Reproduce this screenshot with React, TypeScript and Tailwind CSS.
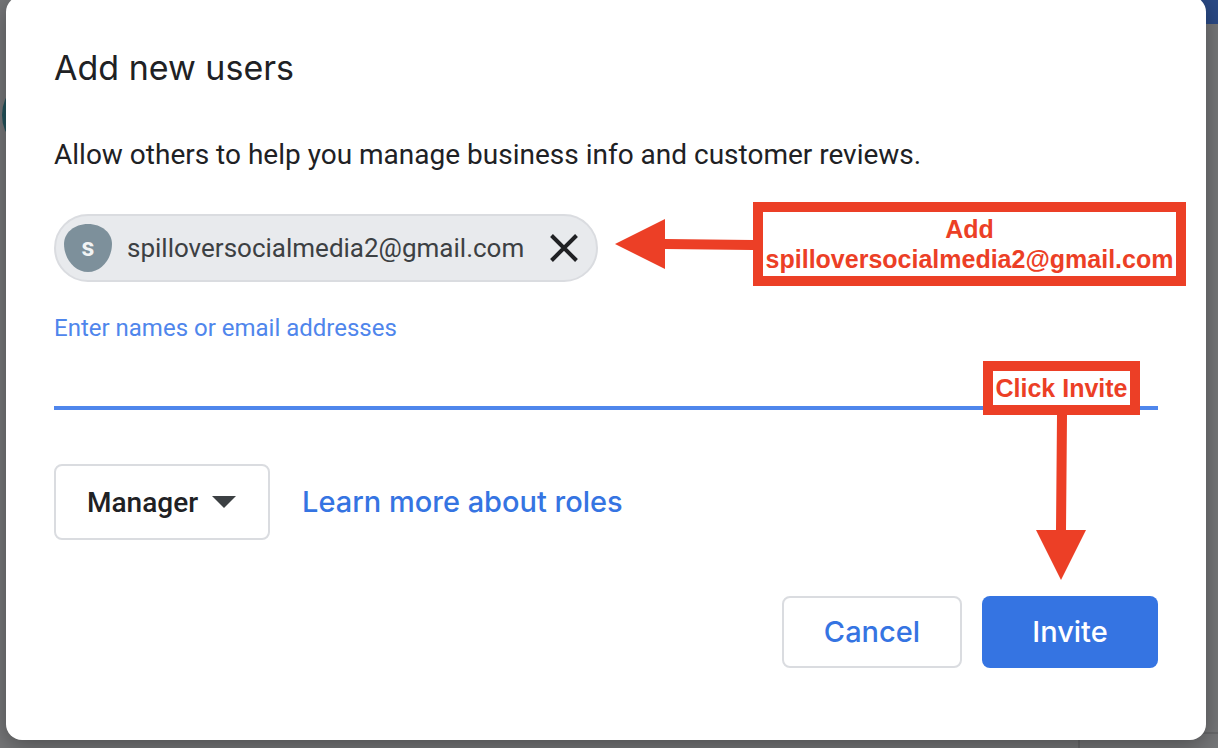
import { useState } from "react";

function Backdrop() {
  return (
    <div aria-hidden="true" className="absolute inset-0 overflow-hidden bg-[#767779]">
      <div className="absolute right-0 top-0 h-6 w-10 bg-[#2a4a86]" />
      <div className="absolute left-0.5 top-[75px] size-20 rounded-full bg-[#23545c]" />
      <div className="absolute bottom-3.5 right-0 h-0.5 w-[138px] bg-[#68696b]" />
      <div className="absolute bottom-0 right-[138px] h-3.5 w-0.5 bg-[#68696b]" />
    </div>
  );
}

function Chip({ email, onRemove }: { email: string; onRemove: () => void }) {
  return (
    <div className="flex h-[68px] w-[544px] items-center rounded-full border-2 border-[#dadce0] bg-[#e8eaed] pl-2 pr-4">
      <svg viewBox="0 0 48 48" className="size-12 shrink-0" aria-hidden="true">
        <path
          d="M24 0C38 0 48 9 48 20C48 34 38 48 24 48C10 48 0 34 0 20C0 9 10 0 24 0Z"
          fill="#7d909b"
        />
        <text
          x="24"
          y="32"
          textAnchor="middle"
          fill="#f1f3f4"
          fontSize="25"
          fontWeight="700"
          fontFamily="Roboto, sans-serif"
        >
          s
        </text>
      </svg>
      <span className="ml-[15px] flex-1 whitespace-nowrap text-[26px] leading-8 text-[#3c4043]">
        {email}
      </span>
      <button type="button" aria-label={"Remove " + email} onClick={onRemove} className="p-0.5">
        <svg viewBox="0 0 28 28" className="size-7" aria-hidden="true">
          <path d="M1.5 1.5L26.500 26.500M26.500 1.5L1.5 26.500" stroke="#202124" strokeWidth="4" />
        </svg>
      </button>
    </div>
  );
}

const callout =
  "border-[10px] border-[#ec3f26] bg-white text-center font-['Liberation_Sans',Arial,sans-serif] text-[25px] font-bold leading-[30px] text-[#ec3f26]";

export default function App() {
  const [emails, setEmails] = useState(["spilloversocialmedia2@gmail.com"]);

  return (
    <div className="relative min-h-screen overflow-hidden pb-2 pl-1.5 pr-3 font-[Roboto,sans-serif]">
      <Backdrop />
      <main
        role="dialog"
        aria-labelledby="dialog-title"
        className="relative -mt-1 rounded-2xl bg-white px-12 pb-[72px] pt-12 shadow-[0_6px_24px_rgba(0,0,0,0.35)]"
      >
        <h1 id="dialog-title" className="font-[Inter,sans-serif] text-[34px] leading-12 text-[#202124]">
          Add new users
        </h1>
        <p className="mt-[45px] text-[28px] leading-9 text-[#202124]">
          Allow others to help you manage business info and customer reviews.
        </p>

        <div className="relative mt-[41px] min-h-[68px]">
          {emails.map((email) => (
            <Chip key={email} email={email} onRemove={() => setEmails([])} />
          ))}
          <div className="absolute -right-7 -top-3 flex items-center">
            <svg viewBox="0 0 138 50" className="h-[50px] w-[138px]" aria-hidden="true">
              <path d="M0 25L50 0V20L138 21V31L50 30V50Z" fill="#ec3f26" />
            </svg>
            <div className={callout + " w-[433px] py-0.5"}>
              Add
              <br />
              spilloversocialmedia2@gmail.com
            </div>
          </div>
        </div>

        <div className="relative mt-[30px]">
          <label htmlFor="invitees" className="block text-[24px] leading-8 text-[#4f86ec]">
            Enter names or email addresses
          </label>
          <input
            id="invitees"
            type="text"
            className="block h-[66px] w-full border-b-4 border-[#4f86ec] bg-transparent text-[26px] text-[#202124] outline-none"
          />
          <div className="absolute right-[18px] top-[49px] z-10 flex w-[157px] flex-col items-center">
            <div className={callout + " w-full py-0.5"}>Click Invite</div>
            <svg viewBox="0 0 51 165" className="h-[165px] w-[51px]" aria-hidden="true">
              <path d="M21 0H31L30 115H50L25 165L0 115H20Z" fill="#ec3f26" />
            </svg>
          </div>
        </div>

        <div className="mt-[54px] flex items-center gap-8">
          <div className="relative">
            <select
              aria-label="Role"
              defaultValue="Manager"
              className="h-[76px] w-[216px] appearance-none rounded-lg border-2 border-[#dadce0] bg-white pl-[31px] pt-0.5 text-[28px] font-medium text-[#202124]"
            >
              <option>Manager</option>
              <option>Owner</option>
            </select>
            <svg
              viewBox="0 0 24 12"
              className="pointer-events-none absolute right-[34px] top-8 h-3 w-6"
              aria-hidden="true"
            >
              <path d="M0 0H24L12 12Z" fill="#3c4043" />
            </svg>
          </div>
          <a href="#roles" className="font-[Inter,sans-serif] text-[29px] font-medium leading-9 text-[#3574e2]">
            Learn more about roles
          </a>
        </div>

        <div className="mt-14 flex justify-end gap-5">
          <button
            type="button"
            className="h-[72px] w-[180px] rounded-lg border-2 border-[#dadce0] font-[Inter,sans-serif] text-[29px] font-medium text-[#3574e2]"
          >
            Cancel
          </button>
          <button
            type="button"
            className="h-[72px] w-44 rounded-lg bg-[#3574e2] font-[Inter,sans-serif] text-[29px] font-medium text-white"
          >
            Invite
          </button>
        </div>
      </main>
    </div>
  );
}
